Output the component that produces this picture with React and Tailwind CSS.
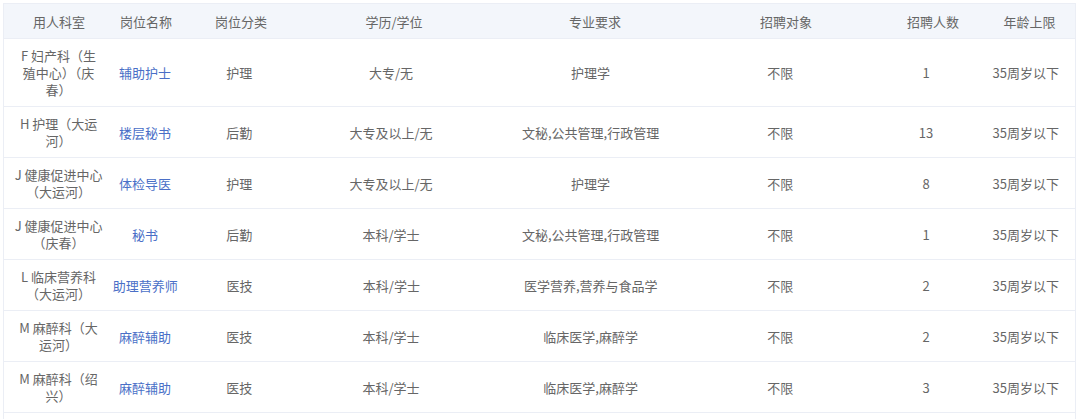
const columns = [
  { key: 'dept', label: '用人科室', width: 'w-[110px]' },
  { key: 'name', label: '岗位名称', width: 'w-[64px]' },
  { key: 'cat', label: '岗位分类', width: 'w-[126px]' },
  { key: 'edu', label: '学历/学位', width: 'w-[180px]' },
  { key: 'major', label: '专业要求', width: 'w-[222px]' },
  { key: 'target', label: '招聘对象', width: 'w-[160px]' },
  { key: 'num', label: '招聘人数', width: 'w-[134px]' },
  { key: 'age', label: '年龄上限', width: 'flex-1 pr-[16px]' },
];

const rows = [
  { dept: ['F 妇产科（生', '殖中心）（庆', '春）'], name: '辅助护士', cat: '护理', edu: '大专/无', major: '护理学', target: '不限', num: '1', age: '35周岁以下' },
  { dept: ['H 护理（大运', '河）'], name: '楼层秘书', cat: '后勤', edu: '大专及以上/无', major: '文秘,公共管理,行政管理', target: '不限', num: '13', age: '35周岁以下' },
  { dept: ['J 健康促进中心', '（大运河）'], name: '体检导医', cat: '护理', edu: '大专及以上/无', major: '护理学', target: '不限', num: '8', age: '35周岁以下' },
  { dept: ['J 健康促进中心', '（庆春）'], name: '秘书', cat: '后勤', edu: '本科/学士', major: '文秘,公共管理,行政管理', target: '不限', num: '1', age: '35周岁以下' },
  { dept: ['L 临床营养科', '（大运河）'], name: '助理营养师', cat: '医技', edu: '本科/学士', major: '医学营养,营养与食品学', target: '不限', num: '2', age: '35周岁以下' },
  { dept: ['M 麻醉科（大', '运河）'], name: '麻醉辅助', cat: '医技', edu: '本科/学士', major: '临床医学,麻醉学', target: '不限', num: '2', age: '35周岁以下' },
  { dept: ['M 麻醉科（绍', '兴）'], name: '麻醉辅助', cat: '医技', edu: '本科/学士', major: '临床医学,麻醉学', target: '不限', num: '3', age: '35周岁以下' },
];

function Cell({ col, children }) {
  return (
    <div className={`${col.width} flex items-center justify-center whitespace-nowrap text-center`}>
      {children}
    </div>
  );
}

export default function App() {
  return (
    <div className="h-[419px] overflow-hidden bg-white pl-[3px] pt-[3px] font-['Noto_Sans_CJK_SC',sans-serif] text-[13px] leading-[17px] text-[#666666]">
      <div className="w-[1073px] border-l border-r border-t border-[#ebeef5]">
        {/* Header */}
        <div className="flex h-[35px] border-b border-[#ebeef5] bg-[#f3f6fb]">
          {columns.map((col) => (
            <Cell key={col.key} col={col}>
              {col.label}
            </Cell>
          ))}
        </div>

        {/* Body */}
        {rows.map((row, i) => (
          <div key={i} className="flex border-b border-[#ebeef5] py-[8px]">
            {columns.map((col) => (
              <Cell key={col.key} col={col}>
                {col.key === 'dept' ? (
                  <div className="flex flex-col items-center">
                    {row.dept.map((line, j) => (
                      <span key={j}>{line}</span>
                    ))}
                  </div>
                ) : col.key === 'name' ? (
                  <span className="text-[#4a6fc7]">{row.name}</span>
                ) : (
                  row[col.key]
                )}
              </Cell>
            ))}
          </div>
        ))}
        <div className="h-[20px]" />
      </div>
    </div>
  );
}
